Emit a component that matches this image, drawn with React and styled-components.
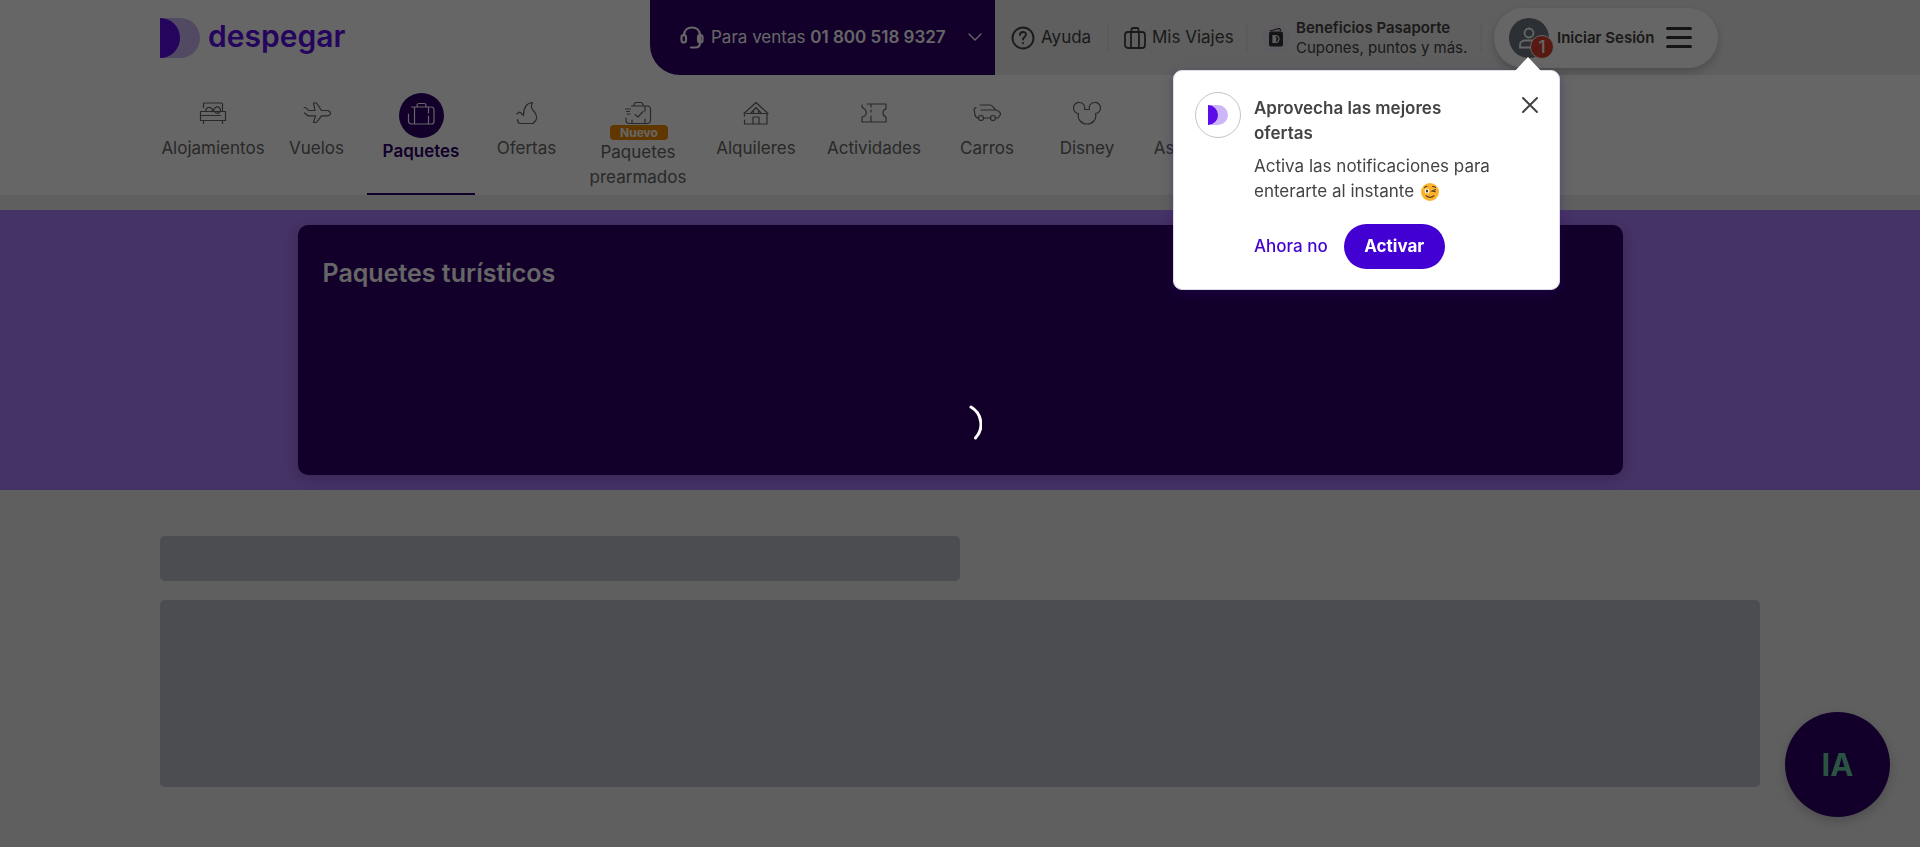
import React from "react";
import styled, { createGlobalStyle, css } from "styled-components";

const GlobalStyle = createGlobalStyle`
  *, *::before, *::after { box-sizing: border-box; }
  body {
    margin: 0;
    background: #eee;
    color: #434343;
    font-family: Inter, "Liberation Sans", sans-serif;
    font-size: 17px;
    line-height: 25px;
  }
  button { font: inherit; color: inherit; border: 0; padding: 0; background: none; cursor: pointer; }
  a { color: inherit; text-decoration: none; }
  h1, h2, p, ul { margin: 0; padding: 0; }
  svg { display: block; flex: none; }
`;

const Page = styled.div`
  min-height: 100vh;
`;

const Header = styled.header`
  background: #fff;
`;

const TopBar = styled.div`
  display: flex;
  height: 75px;
`;

const Brand = styled.div`
  flex: 1;
  display: flex;
  padding: 18px 0 0 160px;
`;

const BrandLink = styled.a`
  display: flex;
  gap: 8px;
  height: 40px;
`;

const Wordmark = styled.span`
  color: #5a0be8;
  font-size: 30px;
  font-weight: 600;
  line-height: 36px;
`;

const SalesButton = styled.button`
  display: flex;
  align-items: center;
  gap: 7px;
  width: 345px;
  padding: 0 13px 0 30px;
  border-radius: 0 0 0 30px;
  background: #2d006b;
  color: #fff;
  white-space: nowrap;
  text-align: left;

  span { flex: 1; }
  b { font-weight: 600; }
`;

const UserBar = styled.nav`
  display: flex;
  align-items: center;
  padding: 0 202px 0 16px;
  background: #eee;
`;

const barDivider = css`
  border-right: 2px solid #e4e4e4;
`;

const BarLink = styled.a`
  ${barDivider}
  display: flex;
  align-items: center;
  gap: 6px;
  width: ${(p) => p.$width}px;
  height: 26px;
  margin-right: ${(p) => p.$after}px;
  white-space: nowrap;
`;

const Benefits = styled.a`
  ${barDivider}
  display: flex;
  align-items: center;
  gap: 6px;
  width: 220px;
  height: 26px;
  margin-right: 12px;
  white-space: nowrap;
`;

const BenefitsIcon = styled.span`
  display: grid;
  place-items: center;
  width: 28px;
  height: 28px;
  border-radius: 50%;
  background: #ebe6f2;
`;

const BenefitsText = styled.span`
  font-size: 15px;
  line-height: 20px;

  b { display: block; font-weight: 600; }
`;

const AccountPill = styled.button`
  display: flex;
  align-items: center;
  width: 224px;
  height: 60px;
  padding: 0 15px;
  border-radius: 30px;
  background: #fff;
  box-shadow: 0 4px 8px rgba(0, 0, 0, 0.2);
  font-size: 15px;
  font-weight: 600;
  white-space: nowrap;
`;

const Avatar = styled.span`
  position: relative;
  display: grid;
  place-items: center;
  width: 40px;
  height: 40px;
  margin-right: 8px;
  border-radius: 50%;
  background: #6f7780;
`;

const Count = styled.span`
  position: absolute;
  right: -5px;
  bottom: -1px;
  width: 24px;
  height: 24px;
  border: 1px solid #fff;
  border-radius: 50%;
  background: #d9402f;
  color: #fff;
  font-size: 17px;
  font-weight: 500;
  line-height: 22px;
  text-align: center;
`;

const Burger = styled.span`
  display: grid;
  gap: 6px;
  margin-left: auto;
  margin-right: 11px;

  i { width: 26px; height: 3px; border-radius: 2px; background: #333; }
`;

const ProductNav = styled.nav`
  display: flex;
  height: 120px;
  padding-left: 160px;
`;

const Product = styled.a`
  display: flex;
  flex-direction: column;
  align-items: center;
  width: ${(p) => p.$width}px;
  padding-top: 18px;
  border-bottom: 2px solid ${(p) => (p.$active ? "#2d006b" : "transparent")};
  color: ${(p) => (p.$active ? "#2d006b" : "#666")};
  font-weight: ${(p) => (p.$active ? 600 : 400)};
  text-align: center;
`;

const ProductIcon = styled.span`
  position: relative;
  display: grid;
  place-items: center;
  height: 43px;
  margin-bottom: ${(p) => (p.$tagged ? 4 : 0)}px;
  padding-bottom: 3px;

  ${(p) =>
    p.$active &&
    css`
      width: 45px;
      height: 45px;
      margin-bottom: 1px;
      border-radius: 50%;
      background: #2d006b;
      color: #fff;
    `}
`;

const Tag = styled.span`
  position: absolute;
  bottom: -4px;
  left: 50%;
  width: 58px;
  margin-left: -28px;
  border-radius: 4px;
  background: #f38b00;
  color: #fff;
  font-size: 12px;
  font-weight: 700;
  line-height: 15px;
`;

const Hero = styled.section`
  margin-top: 15px;
  padding: 15px 24px;
  background: #af80ff;
`;

const SearchBox = styled.div`
  display: flex;
  flex-direction: column;
  align-items: center;
  width: 100%;
  max-width: 1325px;
  min-height: 250px;
  margin: 0 auto;
  padding: 30px 25px;
  border-radius: 10px;
  background: #2d006b;
  box-shadow: 0 4px 16px rgba(45, 0, 107, 0.25);
`;

const SearchTitle = styled.h1`
  align-self: stretch;
  margin-bottom: 110px;
  color: #fff;
  font-size: 25px;
  font-weight: 600;
  line-height: 36px;
`;

const Content = styled.main`
  display: grid;
  gap: 19px;
  padding: 46px 160px 60px;
`;

const Skeleton = styled.div`
  width: ${(p) => p.$width};
  height: ${(p) => p.$height}px;
  border-radius: 5px;
  background: #bdc0c9;
`;

const ChatButton = styled.button`
  position: fixed;
  right: 30px;
  bottom: 30px;
  width: 105px;
  height: 105px;
  border-radius: 50%;
  background: #2d006b;
  box-shadow: 0 4px 12px rgba(0, 0, 0, 0.2);
  color: #69cfa4;
  font-size: 31px;
  font-weight: 700;
`;

const Backdrop = styled.div`
  position: fixed;
  inset: 0;
  background: rgba(0, 0, 0, 0.6);
`;

const Spinner = styled.svg`
  position: relative;
  z-index: 1;
`;

const Popover = styled.section`
  position: absolute;
  top: 70px;
  right: 360px;
  display: flex;
  gap: 13px;
  width: 387px;
  height: 220px;
  padding: 21px;
  border: 1px solid #dcdce6;
  border-radius: 9px;
  background: #fff;
  box-shadow: 0 4px 12px rgba(45, 0, 107, 0.3);
`;

const Arrow = styled.svg`
  position: absolute;
  top: -14px;
  right: 17px;
`;

const PopoverLogo = styled.span`
  display: grid;
  place-items: center;
  flex: none;
  width: 46px;
  height: 46px;
  border: 1px solid #c4c4c4;
  border-radius: 50%;
`;

const PopoverBody = styled.div`
  flex: 1;
  padding-top: 4px;
`;

const PopoverTitle = styled.h2`
  width: 220px;
  margin-bottom: 8px;
  font-size: 17px;
  font-weight: 600;
`;

const Wink = styled.svg`
  display: inline-block;
  margin-left: 7px;
  vertical-align: -4px;
`;

const Actions = styled.div`
  display: flex;
  align-items: center;
  gap: 16px;
  margin-top: 20px;
`;

const TextButton = styled.button`
  color: #4300d2;
  font-weight: 500;
`;

const PrimaryButton = styled.button`
  width: 101px;
  height: 45px;
  border-radius: 23px;
  background: #4300d2;
  color: #fff;
  font-weight: 700;
`;

const CloseButton = styled.button`
  position: absolute;
  top: 23px;
  right: 18px;
  padding: 2px;
`;

function Mark({ size, dark = "#5a0be8", light = "#cdb6f8" }) {
  return (
    <svg width={size} height={size} viewBox="0 0 40 40" aria-hidden="true">
      <path d="M0 0h20a20 20 0 0 1 0 40H0z" fill={light} />
      <path d="M0 0a20 20 0 0 1 0 40z" fill={dark} />
    </svg>
  );
}

function LineIcon({ d, children, width = 28, height = 24, stroke = 1.2 }) {
  return (
    <svg
      width={width}
      height={height}
      viewBox={`0 0 ${width} ${height}`}
      fill="none"
      stroke="currentColor"
      strokeWidth={stroke}
      strokeLinecap="round"
      strokeLinejoin="round"
      aria-hidden="true"
    >
      {d && <path d={d} />}
      {children}
    </svg>
  );
}

const icons = {
  bed: "M4.5 6.5V3a1 1 0 0 1 1-1h17a1 1 0 0 1 1 1v7M7 10.500a3.200 3.200 0 0 1 5.500-3l3 3a3.200 3.200 0 1 0 0-3l-3 3M1.500 10.500h25v9h-25zM1.500 14.500h20M4.500 20v2.500M23.500 20v2.500",
  plane: "M1 6.500l2.500.5 2 2.500H12l-1.500-7.500h3l5 7.500h6.500q2.500 1 2.500 2.700t-2.500 2.600h-6.500l-5 6.700h-3l2-6.700H5L1.500 12",
  case: "M4.500 5H24a3 3 0 0 1 3 3v11.500a2.500 2.500 0 0 1-2.500 2.500H4.500a3 3 0 0 1-3-3V12M7.500 5.500v16.500M21.500 5v6M21.500 14v8M10 5V3.500a2 2 0 0 1 2-2h5a2 2 0 0 1 2 2V5",
  flame: "M4 13q2.500-2.500 3.500-1.500l3 3c0-8 3-12.500 9-13-2 4-1.500 5.500 1.500 9 4 4.500 3.500 8.500-1 12H7c-1.500-.5-2.500-2-2.500-4",
  check: "M7.500 5h16a3 3 0 0 1 3 3v11.500a3 3 0 0 1-3 3H5a3 3 0 0 1-3-3V17M9.500 5l1-2.500q.5-1 1.500-1h5q1 0 1.500 1l1 2.500M1.500 8h5M2.500 10.500h3M3 13h3M11 13.500l3 2.500 5-5.500M8 19v3.500M21 5v5M21 18v4",
  house: "M2 12.500L14 1.500l12 11M4 12.500h20M9 12l5-5.500 5 5.500M11.500 12V9.500M16.500 12V9.500M25 13v10H2.500v-4M2.500 15v-1.500M11 23v-7h6v7",
  ticket: "M7 3h19v5c-4 1-4 7 0 8v5H2v-5c5-1 6-6 1-9L2 6V4M11 3v3M11 9v2M11 15v5",
  car: "M7 4h10c3 0 4 4 6 5 3 1 4.500 2.500 4.500 4.500L25 17h-2.500M8 9h15M3 6.500L1 8l1 6q1 3 3 3M10.500 17h7",
  ears: "M11.500 8.500h5C15.500 4.500 18 1.500 21.500 1.500a5.500 5.500 0 0 1 1 11c1.500 6-3 10.500-8.500 10.500s-10-4.500-8.500-10.500a5.500 5.500 0 0 1 1-11c3.500 0 6 3 5 7z",
  shield: "M14 2l10 4v6c0 6-5 9-10 10C9 21 4 18 4 12V6z",
};

const products = [
  { label: "Alojamientos", icon: "bed", width: 106 },
  { label: "Vuelos", icon: "plane", width: 101 },
  { label: "Paquetes", icon: "case", width: 108, active: true },
  { label: "Ofertas", icon: "flame", width: 103 },
  { label: "Paquetes prearmados", icon: "check", width: 120, tag: "Nuevo" },
  { label: "Alquileres", icon: "house", width: 116 },
  { label: "Actividades", icon: "ticket", width: 120 },
  { label: "Carros", icon: "car", width: 106 },
  { label: "Disney", icon: "ears", width: 94 },
  { label: "Asistencia", icon: "shield", width: 122 },
];

function Headset() {
  return (
    <LineIcon width={24} height={24} stroke={2.2}>
      <path d="M4 9.500C4 4.500 7.500 1.500 12 1.500s8 3 8 8v7.500c0 3-2 4.500-5 4.500h-4" />
      <rect x="1.500" y="9" width="4.500" height="7.500" rx="2.200" />
      <rect x="18" y="9" width="4.500" height="7.500" rx="2.200" />
    </LineIcon>
  );
}

function WinkFace() {
  return (
    <Wink width="18" height="18" viewBox="0 0 18 18" role="img" aria-label="guiño">
      <circle cx="9" cy="9" r="9" fill="#fcb32c" />
      <ellipse cx="6" cy="8" rx="2.300" ry="2.500" fill="#fff" />
      <ellipse cx="6" cy="8" rx="1.200" ry="1.500" fill="#4e342e" />
      <path
        d="M3.500 4.500q1-1.200 2.500-1M11.500 3.500q2 0 3 1M14.500 6.500L11 8l3.500.8M5 12.800q4 3.200 8 0"
        fill="none"
        stroke="#5b3a20"
        strokeWidth="1.100"
        strokeLinecap="round"
      />
    </Wink>
  );
}

export default function App() {
  return (
    <Page>
      <GlobalStyle />
      <Header>
        <TopBar>
          <Brand>
            <BrandLink href="#" aria-label="despegar">
              <Mark size={40} />
              <Wordmark>despegar</Wordmark>
            </BrandLink>
          </Brand>
          <SalesButton type="button">
            <Headset />
            <span>
              Para ventas <b>01 800 518 9327</b>
            </span>
            <LineIcon width={14} height={10} stroke={1.4} d="M1 1l6 6 6-6" />
          </SalesButton>
          <UserBar aria-label="Cuenta">
            <BarLink href="#" $width={98} $after={15}>
              <LineIcon width={24} height={24} stroke={1.9}>
                <circle cx="12" cy="12" r="10.500" />
                <path d="M9 9c0-4 6-4 6-.5 0 2.500-3 2.300-3 5M12 17v.2" />
              </LineIcon>
              Ayuda
            </BarLink>
            <BarLink href="#" $width={124} $after={14}>
              <LineIcon width={22} height={22} stroke={1.8}>
                <rect x="1" y="5" width="20" height="16" rx="3" />
                <path d="M7 5v16M15 5v16M7.500 5V2.500A1.500 1.500 0 0 1 9 1h4a1.500 1.500 0 0 1 1.500 1.500V5" />
              </LineIcon>
              Mis Viajes
            </BarLink>
            <Benefits href="#">
              <BenefitsIcon>
                <svg width="14" height="19" viewBox="0 0 14 19" aria-hidden="true">
                  <path d="M1 3L10 .5q1.500 0 1.500 2.500" fill="none" stroke="#333" strokeWidth="1.200" />
                  <rect y="3.500" width="14" height="15" rx="2" fill="#333" />
                  <path d="M4 7.500h2.500a3.500 3.500 0 0 1 0 7H4z" fill="none" stroke="#eee" strokeWidth="1.200" />
                  <path d="M4 7.500a3.500 3.500 0 0 1 0 7z" fill="#eee" />
                </svg>
              </BenefitsIcon>
              <BenefitsText>
                <b>Beneficios Pasaporte</b>
                Cupones, puntos y más.
              </BenefitsText>
            </Benefits>
            <AccountPill type="button">
              <Avatar>
                <svg width="22" height="22" viewBox="0 0 22 22" fill="none" stroke="#fff" strokeWidth="1.800">
                  <circle cx="11" cy="6" r="4.500" />
                  <path d="M2 20.500v-2.500c0-3 2.500-4.500 5-4.500h8c2.500 0 5 1.500 5 4.500v2.500z" />
                </svg>
                <Count>1</Count>
              </Avatar>
              Iniciar Sesión
              <Burger>
                <i />
                <i />
                <i />
              </Burger>
            </AccountPill>
          </UserBar>
        </TopBar>
        <ProductNav aria-label="Productos">
          {products.map((p) => (
            <Product key={p.label} href="#" $width={p.width} $active={p.active}>
              <ProductIcon $active={p.active} $tagged={Boolean(p.tag)}>
                <LineIcon d={icons[p.icon]}>
                  {p.icon === "car" && (
                    <>
                      <circle cx="8" cy="17" r="2.500" />
                      <circle cx="20" cy="17" r="2.500" />
                    </>
                  )}
                </LineIcon>
                {p.tag && <Tag>{p.tag}</Tag>}
              </ProductIcon>
              {p.label}
            </Product>
          ))}
        </ProductNav>
      </Header>

      <Hero>
        <SearchBox>
          <SearchTitle>Paquetes turísticos</SearchTitle>
          <Spinner width="44" height="44" viewBox="0 0 44 44" fill="none" role="img" aria-label="Cargando">
            <path d="M33 6a20 20 0 0 1 4.500 31" stroke="#fff" strokeWidth="3" strokeLinecap="round" />
          </Spinner>
        </SearchBox>
      </Hero>

      <Content>
        <Skeleton $width="50%" $height={45} />
        <Skeleton $width="100%" $height={187} />
      </Content>

      <ChatButton type="button">IA</ChatButton>
      <Backdrop />

      <Popover role="dialog" aria-labelledby="notice-title">
        <Arrow width="28" height="15" viewBox="0 0 28 15" aria-hidden="true">
          <path d="M0 15L14 0l14 15z" fill="#fff" />
        </Arrow>
        <PopoverLogo>
          <Mark size={20} dark="#5a0be8" light="#cdb6f8" />
        </PopoverLogo>
        <PopoverBody>
          <PopoverTitle id="notice-title">Aprovecha las mejores ofertas</PopoverTitle>
          <p>
            Activa las notificaciones para
            <br />
            enterarte al instante
            <WinkFace />
          </p>
          <Actions>
            <TextButton type="button">Ahora no</TextButton>
            <PrimaryButton type="button">Activar</PrimaryButton>
          </Actions>
        </PopoverBody>
        <CloseButton type="button" aria-label="Cerrar">
          <LineIcon width={18} height={18} stroke={2} d="M2 2l14 14M16 2L2 16" />
        </CloseButton>
      </Popover>
    </Page>
  );
}
